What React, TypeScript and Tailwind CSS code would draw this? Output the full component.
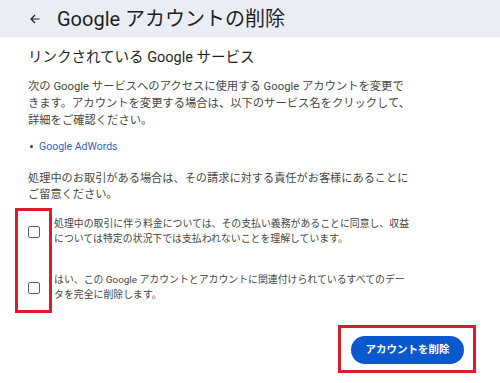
import React from "react";

const font = { fontFamily: 'Roboto, "Noto Sans CJK JP", sans-serif' };

function Checkbox() {
  return <span className="block w-[12px] h-[12px] border-[1.5px] border-[#5f6368] rounded-[2px] shrink-0" />;
}

export default function App() {
  const items = [
    ["処理中の取引に伴う料金については、その支払い義務があることに同意し、収益", "については特定の状況下では支払われないことを理解しています。"],
    ["はい、この Google アカウントとアカウントに関連付けられているすべてのデー", "タを完全に削除します。"],
  ];
  return (
    <div className="relative w-[500px] h-[383px] bg-white overflow-hidden" style={font}>
      <header className="h-[37px] bg-[#e9eef6] flex items-center pl-[30px]">
        <svg width="10" height="10" viewBox="0 0 10 10" className="mt-[1px]">
          <path d="M9.5 5H1 M5 1L1 5L5 9" fill="none" stroke="#1f1f1f" strokeWidth="1.2" />
        </svg>
        <h1 className="ml-[17px] text-[20px] leading-[24px] text-[#1f1f1f]">Google アカウントの削除</h1>
      </header>

      <main className="px-[28px]">
        <h2 className="mt-[11px] text-[14.5px] leading-[20px] text-[#1f1f1f]">リンクされている Google サービス</h2>

        <p className="mt-[10px] text-[11.3px] leading-[17px] text-[#444746] whitespace-nowrap">
          次の Google サービスへのアクセスに使用する Google アカウントを変更で
          <br />
          きます。アカウントを変更する場合は、以下のサービス名をクリックして、
          <br />
          詳細をご確認ください。
        </p>

        <div className="mt-[9px] flex items-center h-[17px]">
          <span className="w-[3px] h-[3px] rounded-full bg-[#3c4043] ml-[2px]" />
          <a className="ml-[6px] text-[10.5px] text-[#2f62b8]">Google AdWords</a>
        </div>

        <p className="mt-[16px] text-[11.2px] leading-[15.5px] text-[#444746] whitespace-nowrap">
          処理中のお取引がある場合は、その請求に対する責任がお客様にあることに
          <br />
          ご留意ください。
        </p>

        <div className="mt-[15px] flex flex-col gap-[27px]">
          {items.map((lines, i) => (
            <label key={i} className="flex items-center gap-[14px]">
              <Checkbox />
              <span className="text-[9.9px] leading-[14.5px] text-[#444746] whitespace-nowrap">
                {lines[0]}
                <br />
                {lines[1]}
              </span>
            </label>
          ))}
        </div>

        <div className="mt-[34px] flex justify-end pr-[8px]">
          <button className="w-[113px] h-[28px] rounded-full bg-[#0b57d0] text-white text-[10.5px] font-bold">
            アカウントを削除
          </button>
        </div>
      </main>

      <div className="absolute left-[15px] top-[208px] w-[37px] h-[105px] border-[3px] border-[#d71f2a]" />
      <div className="absolute left-[338px] top-[325px] w-[138px] h-[48px] border-[3px] border-[#d71f2a]" />
    </div>
  );
}
